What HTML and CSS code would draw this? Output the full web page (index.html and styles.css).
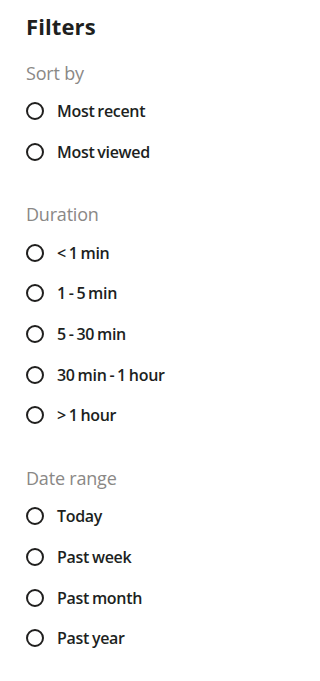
FILE: index.html
```html
<!DOCTYPE html>
<html lang="en">
<head>
<meta charset="utf-8">
<title>Filters</title>
<link rel="stylesheet" href="styles.css">
</head>
<body>
<aside class="panel">
  <h2 class="panel-title">Filters</h2>

  <section class="group">
    <h3 class="group-label">Sort by</h3>
    <label class="option"><span class="radio"></span><span class="option-text">Most recent</span></label>
    <label class="option"><span class="radio"></span><span class="option-text">Most viewed</span></label>
  </section>

  <section class="group">
    <h3 class="group-label">Duration</h3>
    <label class="option"><span class="radio"></span><span class="option-text">&lt; 1 min</span></label>
    <label class="option"><span class="radio"></span><span class="option-text">1 - 5 min</span></label>
    <label class="option"><span class="radio"></span><span class="option-text">5 - 30 min</span></label>
    <label class="option"><span class="radio"></span><span class="option-text">30 min - 1 hour</span></label>
    <label class="option"><span class="radio"></span><span class="option-text">&gt; 1 hour</span></label>
  </section>

  <section class="group">
    <h3 class="group-label">Date range</h3>
    <label class="option"><span class="radio"></span><span class="option-text">Today</span></label>
    <label class="option"><span class="radio"></span><span class="option-text">Past week</span></label>
    <label class="option"><span class="radio"></span><span class="option-text">Past month</span></label>
    <label class="option"><span class="radio"></span><span class="option-text">Past year</span></label>
  </section>
</aside>
</body>
</html>
```

FILE: styles.css
```css
html, body {
  margin: 0;
  padding: 0;
  background: #ffffff;
}

body {
  font-family: "Open Sans", "Noto Sans", sans-serif;
  color: #201f1e;
}

.panel {
  padding: 11px 26px 0 26px;
  display: flex;
  flex-direction: column;
}

.panel-title {
  margin: 0;
  font-size: 22px;
  line-height: 30px;
  font-weight: 700;
  letter-spacing: 0.1px;
  color: #201f1e;
}

.group {
  display: flex;
  flex-direction: column;
  margin-top: 20px;
}

.group + .group {
  margin-top: 30px;
}

.group-label {
  margin: 0 0 6px 0;
  font-size: 18px;
  line-height: 24px;
  font-weight: 400;
  letter-spacing: -0.2px;
  color: #8a8886;
}

.option {
  height: 40.7px;
  display: flex;
  align-items: center;
  gap: 13px;
}

.radio {
  box-sizing: border-box;
  width: 18px;
  height: 18px;
  border: 2px solid #201f1e;
  border-radius: 50%;
  flex: none;
}

.option-text {
  font-size: 16px;
  font-weight: 600;
  letter-spacing: -0.3px;
  word-spacing: -1px;
  color: #201f1e;
}
```
